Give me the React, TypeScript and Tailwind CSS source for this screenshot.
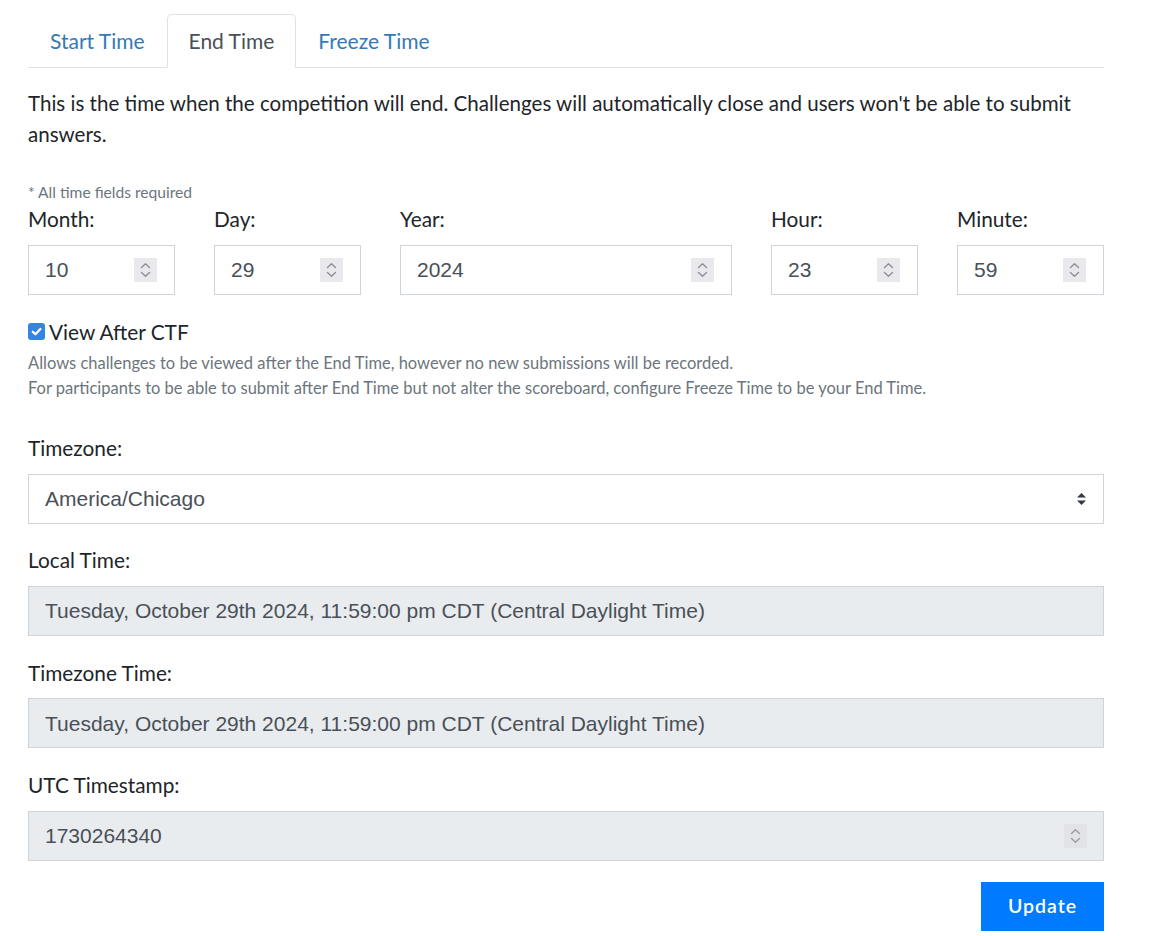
import React from 'react';

const lato = { fontFamily: 'Lato, "Noto Sans", sans-serif' };

function Spinner({ disabled = false }: { disabled?: boolean }) {
    return (
        <div className={`w-[23px] h-[24px] flex items-center justify-center ${disabled ? 'bg-[#e2e3e7]' : 'bg-[#e9e9ed]'}`}>
            <svg width="11" height="16" viewBox="0 0 11 16" fill="none" stroke={disabled ? '#9a9ca3' : '#8d8f94'} strokeWidth="1.4" strokeLinecap="round" strokeLinejoin="round">
                <path d="M1.5 5.5 L5.5 1.8 L9.5 5.5" />
                <path d="M1.5 10.5 L5.5 14.2 L9.5 10.5" />
            </svg>
        </div>
    );
}

function NumberField({ label, value }: { label: string; value: string }) {
    return (
        <div>
            <div className="text-[20.8px] leading-[31.2px] text-[#212529] mb-[10.4px]">{label}</div>
            <div className="h-[50px] border border-[#ced4da] bg-white flex items-center pl-[16px] pr-[17px]">
                <span className="flex-1 text-[21px] text-[#495057] font-['Liberation_Sans',Arial,sans-serif]">{value}</span>
                <Spinner />
            </div>
        </div>
    );
}

function ReadOnlyField({ label, value, spinner = false }: { label: string; value: string; spinner?: boolean }) {
    return (
        <div className="mb-[20.8px]">
            <div className="text-[20.8px] leading-[31.2px] text-[#212529] mb-[10.4px]">{label}</div>
            <div className="h-[50px] border border-[#ced4da] bg-[#e9ecef] flex items-center pl-[16px] pr-[16px]">
                <span className="flex-1 text-[21px] text-[#495057] font-['Liberation_Sans',Arial,sans-serif]">{value}</span>
                {spinner && <Spinner disabled />}
            </div>
        </div>
    );
}

export default function App() {
    const tabs = ['Start Time', 'End Time', 'Freeze Time'];

    return (
        <div className="bg-white min-h-[936px] w-[1153px] pt-[14px] pl-[28px]" style={lato}>
            <div className="w-[1076px]">
                {/* Tabs */}
                <div className="flex border-b border-[#dee2e6]">
                    {tabs.map((t) => (
                        <div
                            key={t}
                            className={`-mb-px px-[21px] py-[10.4px] text-[21px] leading-[31.2px] border rounded-t-[5px] ${
                                t === 'End Time'
                                    ? 'border-[#dee2e6] border-b-white bg-white text-[#495057]'
                                    : 'border-transparent text-[#337ab7]'
                            }`}
                        >
                            {t}
                        </div>
                    ))}
                </div>

                <p className="mt-[20px] text-[20.55px] leading-[31.2px] text-[#212529]">
                    This is the time when the competition will end. Challenges will automatically close and users won't be able to submit answers.
                </p>

                <div className="mt-[32px] text-[15.6px] leading-[21px] text-[#6c757d]">* All time fields required</div>

                {/* Date / time inputs */}
                <div className="grid grid-cols-[147px_147px_1fr_147px_147px] gap-x-[39px]">
                    <NumberField label="Month:" value="10" />
                    <NumberField label="Day:" value="29" />
                    <NumberField label="Year:" value="2024" />
                    <NumberField label="Hour:" value="23" />
                    <NumberField label="Minute:" value="59" />
                </div>

                {/* View after CTF */}
                <div className="mt-[20.8px] flex items-center gap-[4px]">
                    <div className="w-[17px] h-[17px] rounded-[3px] bg-[#3584e4] flex items-center justify-center">
                        <svg width="13" height="13" viewBox="0 0 12 12" fill="none" stroke="white" strokeWidth="2" strokeLinecap="round" strokeLinejoin="round">
                            <path d="M2.5 6.2 L5 8.6 L9.6 3.6" />
                        </svg>
                    </div>
                    <span className="text-[20.8px] leading-[31.2px] text-[#212529]">View After CTF</span>
                </div>
                <div className="mt-[4.5px] text-[16.5px] leading-[25px] text-[#6c757d]">
                    <div>Allows challenges to be viewed after the End Time, however no new submissions will be recorded.</div>
                    <div>For participants to be able to submit after End Time but not alter the scoreboard, configure Freeze Time to be your End Time.</div>
                </div>

                {/* Timezone */}
                <div className="mt-[30.5px] mb-[20.8px]">
                    <div className="text-[20.8px] leading-[31.2px] text-[#212529] mb-[10.4px]">Timezone:</div>
                    <div className="h-[50px] border border-[#ced4da] bg-white flex items-center pl-[16px] pr-[16px]">
                        <span className="flex-1 text-[21px] text-[#495057] font-['Liberation_Sans',Arial,sans-serif]">America/Chicago</span>
                        <svg width="11" height="14" viewBox="0 0 11 14" fill="#343a40">
                            <path d="M5.5 1 L10 5.6 L1 5.6 Z" />
                            <path d="M5.5 13 L10 8.4 L1 8.4 Z" />
                        </svg>
                    </div>
                </div>

                <ReadOnlyField label="Local Time:" value="Tuesday, October 29th 2024, 11:59:00 pm CDT (Central Daylight Time)" />
                <ReadOnlyField label="Timezone Time:" value="Tuesday, October 29th 2024, 11:59:00 pm CDT (Central Daylight Time)" />
                <ReadOnlyField label="UTC Timestamp:" value="1730264340" spinner />

                <div className="flex justify-end">
                    <button className="w-[123px] h-[49px] bg-[#007bff] text-white text-[19.5px] font-semibold tracking-[1px]">
                        Update
                    </button>
                </div>
            </div>
        </div>
    );
}
